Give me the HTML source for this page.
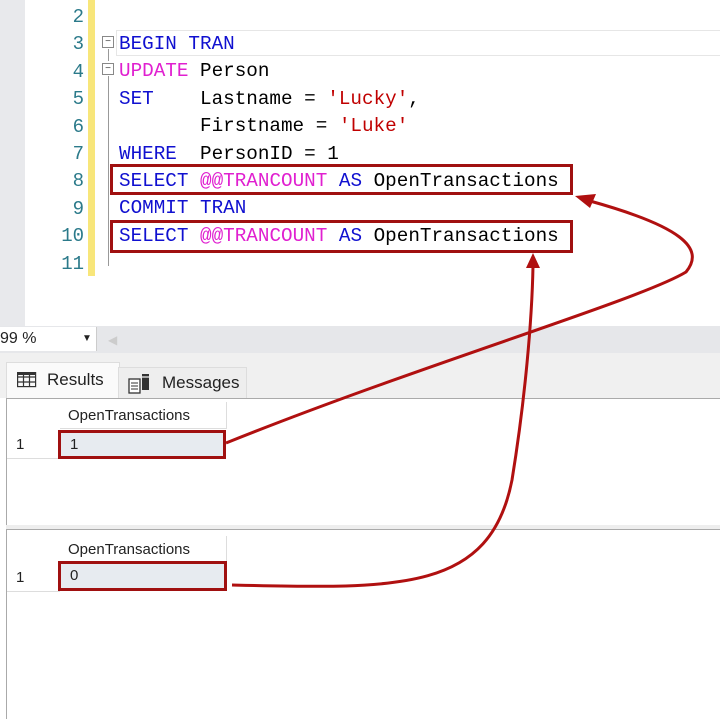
<!DOCTYPE html>
<html><head><style>
body{margin:0;width:720px;height:718px;overflow:hidden;background:#fff;position:relative;font-family:"Liberation Sans",sans-serif}
.a{position:absolute}
.code{font-family:"Liberation Mono",monospace;font-size:19.3px;white-space:pre;color:#000}
.ln{font-family:"Liberation Mono",monospace;font-size:19px;color:#2b7a8a;text-align:right;width:60px;left:24px;white-space:pre}
.k{color:#1010d0}.p{color:#e020d0}.s{color:#c00000}
.cell{font-size:15px;color:#222}
</style></head><body>
<div class="a" style="left:0;top:0;width:25px;height:326px;background:#e8e9ec"></div>
<div class="a" style="left:88px;top:0;width:7px;height:276px;background:#f8e67a"></div>
<div class="a" style="left:116px;top:30px;width:604px;height:24px;border:1px solid #e6e6e6;border-right:none"></div>
<div class="a" style="left:102px;top:36px;width:10px;height:10px;border:1px solid #888;font-size:10px;line-height:9px;text-align:center;color:#444">−</div>
<div class="a" style="left:102px;top:63px;width:10px;height:10px;border:1px solid #888;font-size:10px;line-height:9px;text-align:center;color:#444">−</div>
<div class="a" style="left:108px;top:49px;width:1px;height:12px;background:#999"></div>
<div class="a" style="left:108px;top:76px;width:1px;height:190px;background:#999"></div>
<div class="a ln" style="top:4px;line-height:27.4px">2
3
4
5
6
7
8
9
10
11</div>
<div class="a code" style="left:119px;top:31px;line-height:27.4px"><span class="k">BEGIN TRAN</span>
<span class="p">UPDATE</span> Person
<span class="k">SET</span>    Lastname = <span class="s">'Lucky'</span>,
       Firstname = <span class="s">'Luke'</span>
<span class="k">WHERE</span>  PersonID = 1
<span class="k">SELECT</span> <span class="p">@@TRANCOUNT</span> <span class="k">AS</span> OpenTransactions
<span class="k">COMMIT TRAN</span>
<span class="k">SELECT</span> <span class="p">@@TRANCOUNT</span> <span class="k">AS</span> OpenTransactions
</div>
<div class="a" style="left:110px;top:164px;width:457px;height:25px;border:3px solid #a01010"></div>
<div class="a" style="left:110px;top:220px;width:457px;height:27px;border:3px solid #a01010"></div>
<!-- bar -->
<div class="a" style="left:0;top:326px;width:720px;height:27px;background:#e6e7ea"></div>
<div class="a" style="left:0;top:327px;width:96px;height:24px;background:#fff;border-right:1px solid #ccc;font-size:16px;line-height:24px;color:#222">99 %<span style="position:absolute;left:82px;font-size:10px">▼</span></div>
<div class="a" style="left:108px;top:333px;color:#ccc;font-size:12px">◀</div>
<div class="a" style="left:0;top:353px;width:720px;height:45px;background:#f0f0f0"></div>
<div class="a" style="left:6px;top:362px;width:112px;height:36px;background:#fafafa;border:1px solid #ddd;border-bottom:none;font-size:17px;line-height:34px;color:#222">
<svg style="position:absolute;left:10px;top:9px" width="20" height="16"><g fill="none" stroke="#333" stroke-width="1.2"><rect x="0.6" y="0.6" width="18" height="14"/><line x1="0" y1="5" x2="19" y2="5"/><line x1="0" y1="10" x2="19" y2="10"/><line x1="6.5" y1="0" x2="6.5" y2="15"/><line x1="12.5" y1="0" x2="12.5" y2="15"/></g><rect x="0" y="0" width="19" height="3" fill="#333"/></svg>
<span style="position:absolute;left:40px">Results</span></div>
<div class="a" style="left:118px;top:367px;width:127px;height:31px;background:#eee;border:1px solid #ddd;border-bottom:none;font-size:17px;line-height:30px;color:#222">
<svg style="position:absolute;left:9px;top:5px" width="24" height="22"><rect x="1" y="6" width="11" height="14" fill="#fff" stroke="#333" stroke-width="1.3"/><g stroke="#333"><line x1="3" y1="10" x2="10" y2="10"/><line x1="3" y1="13" x2="10" y2="13"/><line x1="3" y1="16" x2="10" y2="16"/></g><rect x="14" y="1" width="7" height="16" fill="#333"/><rect x="14" y="3" width="7" height="2" fill="#aaa"/></svg>
<span style="position:absolute;left:43px">Messages</span></div>
<!-- panels -->
<div class="a" style="left:6px;top:398px;width:714px;height:126px;border:1px solid #aaa;border-right:none;background:#fff"></div>
<div class="a" style="left:6px;top:529px;width:714px;height:189px;border-top:1px solid #aaa;border-left:1px solid #aaa;background:#fff"></div>
<div class="a" style="left:6px;top:525px;width:714px;height:4px;background:#eee"></div>
<div class="a" style="left:60px;top:402px;width:166px;height:26px;border-right:1px solid #ddd;border-bottom:1px solid #ddd"></div>
<div class="a" style="left:7px;top:428px;width:53px;height:30px;border-bottom:1px solid #ddd"></div>
<div class="a cell" style="left:68px;top:407px">OpenTransactions</div>
<div class="a cell" style="left:16px;top:436px">1</div>
<div class="a" style="left:58px;top:430px;width:162px;height:23px;border:3px solid #a01010;background:#e7ebf0"></div>
<div class="a cell" style="left:70px;top:436px">1</div>
<div class="a" style="left:60px;top:536px;width:166px;height:26px;border-right:1px solid #ddd;border-bottom:1px solid #ddd"></div>
<div class="a" style="left:7px;top:562px;width:53px;height:29px;border-bottom:1px solid #ddd"></div>
<div class="a cell" style="left:68px;top:541px">OpenTransactions</div>
<div class="a cell" style="left:16px;top:569px">1</div>
<div class="a" style="left:58px;top:561px;width:163px;height:24px;border:3px solid #a01010;background:#e7ebf0"></div>
<div class="a cell" style="left:70px;top:567px">0</div>
<svg class="a" style="left:0;top:0" width="720" height="718">
<g fill="none" stroke="#b01010" stroke-width="3">
<path d="M226,443 C420,365 640,300 686,272 C706,248 680,226 590,201"/>
<path d="M232,585 C400,589 490,592 512,480 C525,400 532,320 533,266"/>
</g>
<g fill="#b01010">
<polygon points="575,196 596,194 590,208"/>
<polygon points="533,253 526,268 540,268"/>
</g>
</svg>
</body></html>
